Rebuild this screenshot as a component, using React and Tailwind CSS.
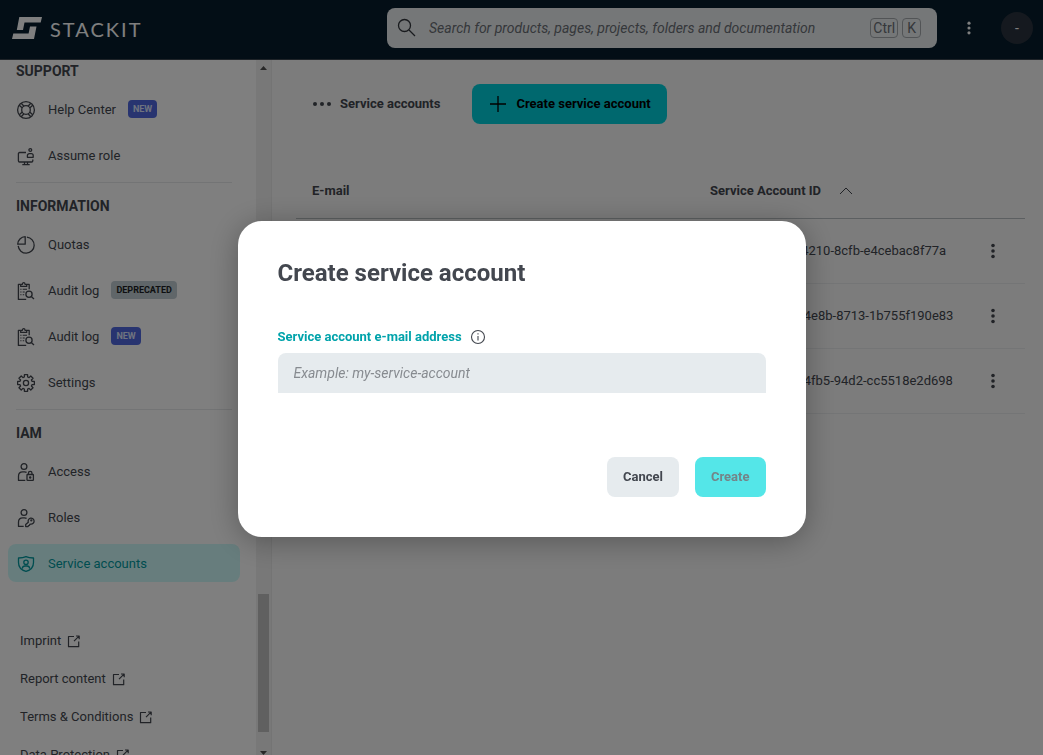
import { useState } from "react";

const Svg = ({ size = 20, children, className = "" }) => (
  <svg
    width={size}
    height={size}
    viewBox={`0 0 ${size} ${size}`}
    fill="none"
    stroke="currentColor"
    strokeWidth="1.3"
    strokeLinejoin="round"
    className={`shrink-0 ${className}`}
    aria-hidden="true"
  >
    {children}
  </svg>
);

const HelpIcon = () => (
  <Svg>
    <circle cx="10" cy="10" r="8.4" />
    <circle cx="10" cy="10" r="4.3" />
    <path d="M3.3 5.2 6.3 8M5.2 3.3 8 6.3M16.7 5.2 13.7 8M14.8 3.3 12 6.3M3.3 14.8l3-2.8M5.2 16.7 8 13.7M16.7 14.8l-3-2.8M14.8 16.7 12 13.7" />
  </Svg>
);

const AssumeIcon = () => (
  <Svg>
    <path d="M10 6.5H3.6A1.2 1.2 0 0 0 2.4 7.7v7.1a1.2 1.2 0 0 0 1.2 1.2h12a1.2 1.2 0 0 0 1.2-1.2v-1.3M8.5 16v2.5M11.5 16v2.5M6.3 18.7h7.4" />
    <circle cx="14.3" cy="4" r="1.4" />
    <path d="M11.4 11.3V9.6c0-1.2.8-1.9 1.9-1.9h2c1.1 0 1.9.7 1.9 1.9v1.7z" />
  </Svg>
);

const QuotaIcon = () => (
  <Svg>
    <path d="M10.9 2.2a8 8 0 1 1-8.7 8.7" />
    <path d="M9.2 1.7v7.5H1.7a7.6 7.6 0 0 1 7.5-7.5z" />
  </Svg>
);

const AuditIcon = () => (
  <Svg>
    <path d="M4.4 3.4h-2v15h7.8M10.8 3.4h2.4v4.9" />
    <path d="M4.7 5.4V3.3h1.7c0-1 .5-1.7 1.3-1.7S9 2.3 9 3.3h1.7v2.1z" />
    <path d="M4.3 8.2h1.2M6.7 8.2h4.3M4.3 11h1.2M6.7 11h2M4.3 13.7h1.2M6.7 13.7h1.5" strokeWidth="1.1" />
    <circle cx="13" cy="13.2" r="3.1" />
    <path d="m15.3 15.5 2.7 2.5" />
  </Svg>
);

// eight-tooth cog, four points per tooth
const cogPath = Array.from({ length: 8 }, (_, i) => {
  const mid = (i * Math.PI) / 4;
  return [
    [6.2, -0.27],
    [8.5, -0.19],
    [8.5, 0.19],
    [6.2, 0.27],
  ].map(([r, a]) => `${(10 + r * Math.sin(mid + a)).toFixed(2)} ${(10 - r * Math.cos(mid + a)).toFixed(2)}`);
})
  .flat()
  .join("L");

const SettingsIcon = () => (
  <Svg>
    <path d={`M${cogPath}Z`} />
    <circle cx="10" cy="10" r="2.6" />
  </Svg>
);

const AccessIcon = () => (
  <Svg>
    <circle cx="8" cy="4.5" r="2.9" />
    <path d="M9.3 18.4H2.5v-4.2c0-2.7 1.6-4.3 4.2-4.3h1.8c.8 0 1.5.2 2.1.5" />
    <rect x="11" y="12.5" width="6.4" height="5.9" rx=".6" />
    <path d="M12.4 12.4v-1.2a1.8 1.8 0 0 1 3.6 0v1.2" />
    <circle cx="14.2" cy="15.4" r=".6" fill="currentColor" />
  </Svg>
);

const RolesIcon = () => (
  <Svg>
    <circle cx="8" cy="4.5" r="2.9" />
    <path d="M7.7 18.4H2.5v-4.2c0-2.7 1.6-4.3 4.2-4.3h1.8c.8 0 1.5.2 2.1.5" />
    <path d="M12.3 14.2a3 3 0 1 1 2.5 1.9l-1 .3-.3 1-1 .2-.4 1H9.7v-2z" />
    <circle cx="15.3" cy="12.4" r=".5" />
  </Svg>
);

const ShieldIcon = () => (
  <Svg>
    <path d="M10 2.600c-2 1-4.500 1.400-7.500 1.400v4.500c0 4.300 3 7.700 7.500 8.900 4.500-1.200 7.500-4.600 7.500-8.900V4c-3 0-5.500-.4-7.500-1.400z" />
    <circle cx="10" cy="8.300" r="2.200" />
    <path d="M6.200 14.600c.3-1.700 1.300-2.600 2.700-2.600h2.200c1.400 0 2.400.9 2.700 2.600" />
  </Svg>
);

const ExternalIcon = () => (
  <Svg size={13}>
    <path d="M7 1.500H1.500v10.200h10.200V6.500M9 1h3.200v3.200M12 1.200 7 6.200" strokeWidth="1.200" />
  </Svg>
);

const Kebab = ({ className = "" }) => (
  <svg width="6" height="16" viewBox="0 0 6 16" fill="currentColor" className={className} aria-hidden="true">
    <circle cx="3" cy="2.500" r="1.800" />
    <circle cx="3" cy="8" r="1.800" />
    <circle cx="3" cy="13.500" r="1.800" />
  </svg>
);

const sections = [
  {
    title: "SUPPORT",
    items: [
      { label: "Help Center", icon: HelpIcon, badge: "NEW" },
      { label: "Assume role", icon: AssumeIcon },
    ],
  },
  {
    title: "INFORMATION",
    items: [
      { label: "Quotas", icon: QuotaIcon },
      { label: "Audit log", icon: AuditIcon, badge: "DEPRECATED" },
      { label: "Audit log", icon: AuditIcon, badge: "NEW" },
      { label: "Settings", icon: SettingsIcon },
    ],
  },
  {
    title: "IAM",
    items: [
      { label: "Access", icon: AccessIcon },
      { label: "Roles", icon: RolesIcon },
      { label: "Service accounts", icon: ShieldIcon, active: true },
    ],
  },
];

const footerLinks = ["Imprint", "Report content", "Terms & Conditions", "Data Protection"];

const accounts = [
  { email: "backup-runner@sa.stackit.cloud", id: "1c7e40fb-93d2-4210-8cfb-e4cebac8f77a" },
  { email: "ci-deploy@sa.stackit.cloud", id: "5b02e9d4-71ac-4e8b-8713-1b755f190e83" },
  { email: "monitoring@sa.stackit.cloud", id: "a86d3e17-20c9-4fb5-94d2-cc5518e2d698" },
];

function Badge({ children }) {
  const color = children === "NEW" ? "bg-[#5069e0] text-[#dfe6ff]" : "bg-[#c0ccd2] text-[#1c1f24]";
  return <span className={`mb-0.5 rounded px-[5px] text-[9px] leading-[18px] font-bold ${color}`}>{children}</span>;
}

function Header() {
  return (
    <header className="flex h-15 shrink-0 items-center border-b border-[#3c4650] bg-[#061c2c] pr-[10px] pb-1 pl-3">
      <a href="#" className="flex shrink-0 items-center gap-2 text-white">
        <svg width="30" height="22" viewBox="0 0 30 22" fill="currentColor" aria-hidden="true">
          <path d="M7.300 0H30l-1.300 5.500H12.500L11 13H4.800z" />
          <path d="M18 9.500h6.500L22 22H0l1.300-5.500h15.300z" />
        </svg>
        <span className="pt-0.5 font-[Lato] text-xl leading-5 tracking-widest">STACKIT</span>
      </a>
      <label className="mr-4 ml-auto flex h-10 w-full max-w-[550px] items-center gap-3 rounded-lg bg-[#ebeff1] px-[10px] text-[#33373d]">
        <Svg className="text-[#33373d]">
          <circle cx="7.500" cy="7.500" r="6" />
          <path d="m12 12 6 6" />
        </Svg>
        <input
          type="search"
          aria-label="Search"
          placeholder="Search for products, pages, projects, folders and documentation"
          className="min-w-0 flex-1 bg-transparent text-sm italic outline-none placeholder:text-[#6b7076]"
        />
        <span className="mr-[6px] flex gap-1 text-sm leading-[18px] text-[#6b7076]">
          <kbd className="rounded border border-[#a4a9ad] px-[2px] font-[Roboto]">Ctrl</kbd>
          <kbd className="rounded border border-[#a4a9ad] px-1 font-[Roboto]">K</kbd>
        </span>
      </label>
      <button aria-label="More" className="flex h-8 w-8 shrink-0 items-center justify-center text-white">
        <Kebab className="h-[14px]" />
      </button>
      <button aria-label="Account" className="ml-4 h-8 w-8 shrink-0 rounded-full bg-[#2b333e] text-sm text-white">
        -
      </button>
    </header>
  );
}

function Sidebar() {
  return (
    <aside className="flex shrink-0 overflow-hidden bg-white">
      <div className="w-64">
        <nav>
          {sections.map((section, i) => (
            <section key={section.title}>
              {i > 0 && <hr className="mt-2 mr-6 mb-3 ml-4 border-[#e6e8ea]" />}
              <h2 className="px-4 pb-2 text-sm leading-[22px] font-bold">{section.title}</h2>
              <ul className="flex flex-col gap-2 pr-4 pl-2">
                {section.items.map(({ label, icon: Icon, badge, active }, n) => (
                  <li key={n}>
                    <a
                      href="#"
                      className={`flex h-[38px] items-center gap-3 rounded-lg px-2 pt-0.5 text-[13px] ${
                        active ? "bg-[#cffbfb] text-[#009aa0]" : ""
                      }`}
                    >
                      <Icon />
                      <span>{label}</span>
                      {badge && <Badge>{badge}</Badge>}
                    </a>
                  </li>
                ))}
              </ul>
            </section>
          ))}
        </nav>
        <ul className="mt-10 pl-5 text-[13px]">
          {footerLinks.map((label) => (
            <li key={label}>
              <a href="#" className="flex h-[38px] items-center gap-[6px]">
                {label}
                <ExternalIcon />
              </a>
            </li>
          ))}
        </ul>
      </div>
      <div className="flex h-full w-4 flex-col items-center justify-between border-r border-[#e8e8e8] bg-[#f1f1f1]">
        <svg width="7" height="17" viewBox="0 0 7 17" fill="#505050" aria-hidden="true">
          <path d="M3.500 6 7 10H0z" />
        </svg>
        <div className="flex w-full flex-1 flex-col justify-end px-[2px] pb-[6px]">
          <div className="h-[21%] bg-[#c1c1c1]" />
        </div>
        <svg width="7" height="17" viewBox="0 0 7 17" fill="#505050" aria-hidden="true">
          <path d="M3.500 17 0 13h7z" />
        </svg>
      </div>
    </aside>
  );
}

function AccountsPage() {
  return (
    <main className="min-w-0 flex-1 overflow-hidden bg-[#f8f8f8] pt-6 pr-[18px] pl-6">
      <div className="flex items-center pl-4">
        <svg width="20" height="6" viewBox="0 0 20 6" fill="currentColor" aria-hidden="true">
          <circle cx="3" cy="3" r="2" />
          <circle cx="10" cy="3" r="2" />
          <circle cx="17" cy="3" r="2" />
        </svg>
        <h1 className="ml-2 text-[13px] font-bold">Service accounts</h1>
        <button className="ml-8 flex h-10 items-center gap-2 rounded-lg bg-[#00d0dc] px-4 text-[13px] font-bold text-black">
          <Svg>
            <path d="M10 2v16M2 10h16" />
          </Svg>
          Create service account
        </button>
      </div>
      <table className="mt-10 w-full table-fixed text-left text-[13px]">
        <thead className="border-b border-[#b8bec2]">
          <tr className="h-[54px]">
            <th className="w-[398px] pl-4">E-mail</th>
            <th className="pl-4">
              <button className="flex items-center gap-[18px] font-bold">
                Service Account ID
                <svg width="14" height="8" viewBox="0 0 14 8" fill="none" stroke="currentColor" aria-hidden="true">
                  <path d="m1 7 6-6 6 6" />
                </svg>
              </button>
            </th>
            <th className="w-16" aria-label="Actions" />
          </tr>
        </thead>
        <tbody>
          {accounts.map((account) => (
            <tr key={account.id} className="h-[65px] border-b border-[#e8eaec]">
              <td className="pl-4">{account.email}</td>
              <td className="pl-4 whitespace-nowrap">{account.id}</td>
              <td className="pl-5">
                <button aria-label="Actions" className="flex h-8 w-6 items-center justify-center">
                  <Kebab />
                </button>
              </td>
            </tr>
          ))}
        </tbody>
      </table>
    </main>
  );
}

function CreateDialog() {
  const [name, setName] = useState("");

  return (
    <div className="fixed inset-0 flex items-center justify-center bg-black/50 pt-[3px]">
      <form
        role="dialog"
        aria-labelledby="dialog-title"
        className="w-full max-w-[568px] rounded-3xl bg-white p-10 shadow-[0_4px_30px_rgba(0,0,0,0.3)]"
      >
        <h2 id="dialog-title" className="text-2xl leading-6 font-bold">
          Create service account
        </h2>
        <div className="mt-10 mb-1 flex h-6 items-center gap-2">
          <label htmlFor="account-name" className="text-[13px] font-bold text-[#00a3ab]">
            Service account e-mail address
          </label>
          <Svg size={16}>
            <circle cx="8" cy="8" r="6.500" strokeWidth="1.100" />
            <path d="M8 7v4.500M8 4.300v1.300" strokeWidth="1.100" />
          </Svg>
        </div>
        <input
          id="account-name"
          value={name}
          onChange={(e) => setName(e.target.value)}
          placeholder="Example: my-service-account"
          className="h-10 w-full rounded-t-lg bg-[#e6ebee] px-4 text-sm italic outline-none placeholder:text-[#878b90]"
        />
        <div className="mt-16 flex justify-end gap-4 text-[13px] font-bold">
          <button type="button" className="h-10 rounded-lg bg-[#e6ebee] px-4">
            Cancel
          </button>
          <button type="button" className="h-10 rounded-lg bg-[#54e6e8] px-4 text-[#748488]">
            Create
          </button>
        </div>
      </form>
    </div>
  );
}

export default function App() {
  return (
    <div className="flex h-screen flex-col overflow-hidden font-[Roboto,sans-serif] text-[#43474f]">
      <Header />
      <div className="flex min-h-0 flex-1">
        <Sidebar />
        <AccountsPage />
      </div>
      <CreateDialog />
    </div>
  );
}
